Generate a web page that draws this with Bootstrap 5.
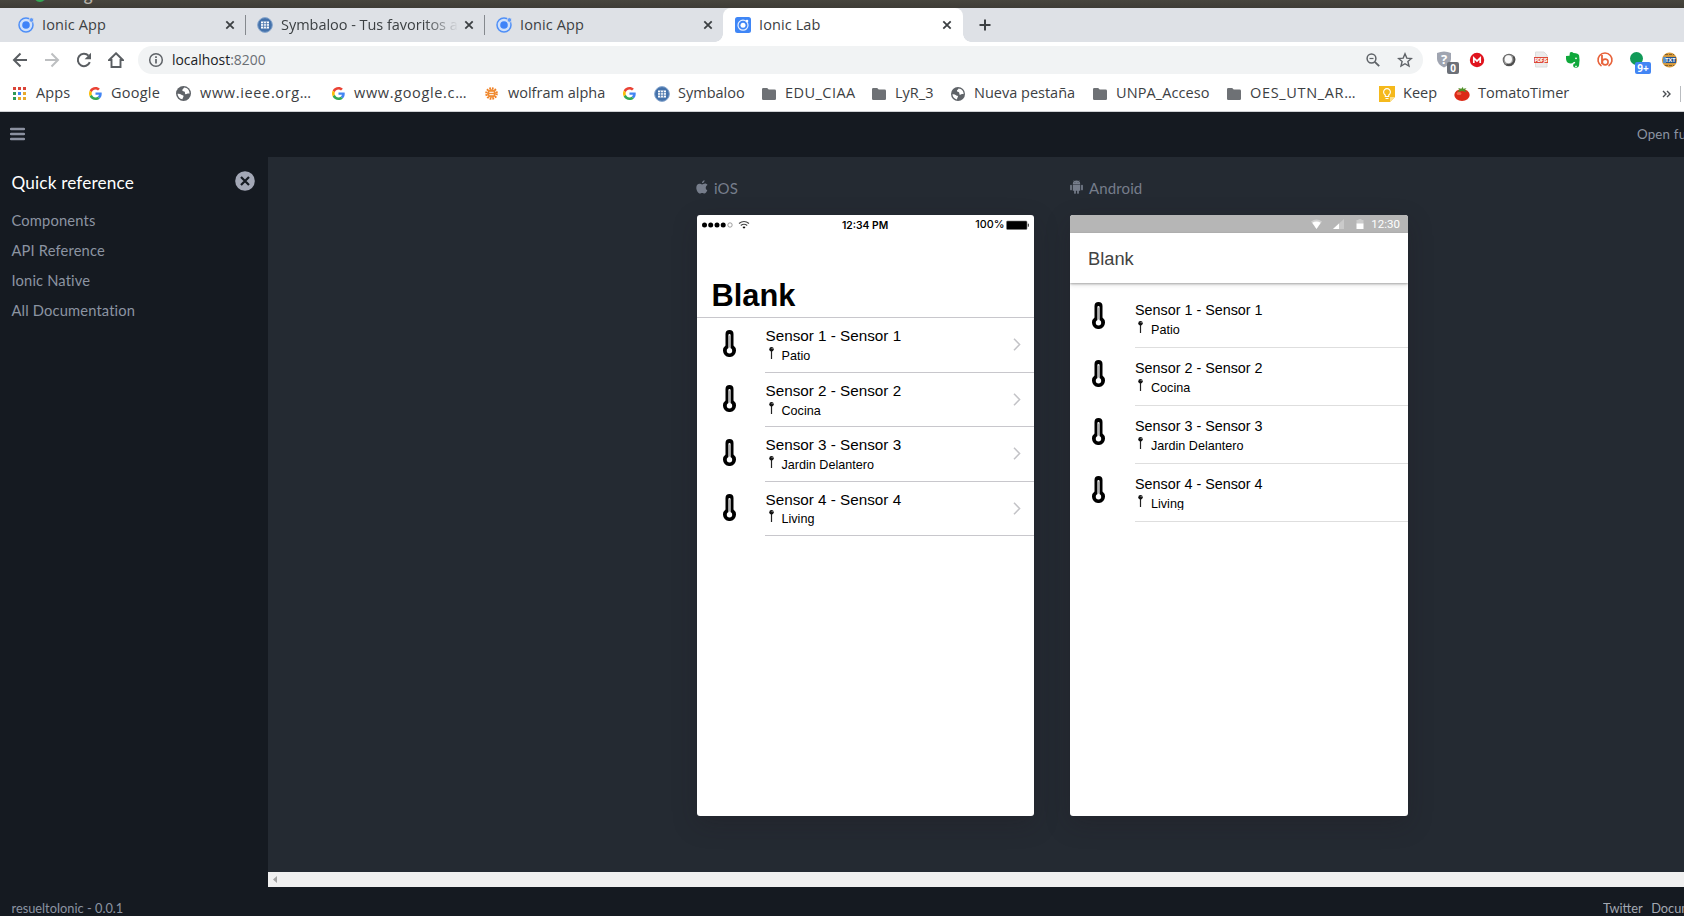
<!DOCTYPE html>
<html lang="es">
<head>
<meta charset="utf-8">
<meta name="viewport" content="width=device-width, initial-scale=1">
<title>Ionic Lab</title>
<link href="https://cdn.jsdelivr.net/npm/bootstrap@5.3.0/dist/css/bootstrap.min.css" rel="stylesheet">
<style>
  html, body { height: 100%; }
  body { font-family: "Open Sans", "Noto Sans", sans-serif; font-size: 14.5px; line-height: 20px; color: #3c4043; background: #151a21; overflow: hidden; }
  svg { display: block; flex: none; }
  .window-title { height: 8px; background: linear-gradient(#47453e, #3e3c36); color: #b5b1a8; padding-left: 34px; font-size: 15.4px; font-weight: 600; }
  .window-title > * { margin-top: -15px; }
  .window-title > svg { margin-top: -11px; }
  .tab-strip { height: 34px; background: #dee1e6; }
  .browser-tab { height: 34px; position: relative; white-space: nowrap; }
  .browser-tab .tab-label { padding-left: 8px; line-height: 31px; height: 33px; overflow: hidden; letter-spacing: .1px; }
  .tab-sep { width: 1px; height: 20px; margin-top: 7px; background: #85898e; }
  .tab-active { background: #fff; border-radius: 8px 8px 0 0; }
  .tab-active::before, .tab-active::after { content: ""; position: absolute; bottom: 0; width: 8px; height: 8px; }
  .tab-active::before { left: -8px; background: radial-gradient(circle at 0 0, transparent 7.5px, #fff 8px); }
  .tab-active::after { right: -8px; background: radial-gradient(circle at 100% 0, transparent 7.5px, #fff 8px); }
  .faded { -webkit-mask-image: linear-gradient(90deg, #000 82%, transparent 101%); mask-image: linear-gradient(90deg, #000 82%, transparent 101%); }
  .nav-bar { height: 36px; background: #fff; padding-left: 12px; }
  .nav-buttons { width: 126px; gap: 16px; }
  .omnibox { width: 1285px; height: 28px; border-radius: 14px; background: #f1f3f4; padding: 0 10px; font-size: 13.9px; color: #202124; }
  .omnibox .port { color: #6b6f74; }
  .ext { width: 32px; height: 28px; position: relative; }
  .ext-count { position: absolute; font: bold 10px/12px "Open Sans", sans-serif; color: #fff; border-radius: 2px; text-align: center; height: 12px; top: 16px; }
  .bookmarks { height: 34px; background: #fff; border-bottom: 1px solid #cfd1d4; display: grid; white-space: nowrap; padding: 0 0 2px 13px;
    grid-template-columns: 76px 87px 155px 154px 138px 31px 108px 110px 79px 142px 134px 152px 75px 208px 1fr; align-items: center; }
  .bm { display: flex; align-items: center; }
  .bm span { position: relative; top: -1px; }
  .bm .loose { letter-spacing: .66px; }
  .lab { font-family: Lato, sans-serif; color: #8c94a2; }
  .lab-header { height: 45px; background: #151a21; padding: 0 0 0 10px; }
  .open-full { width: 47px; font-size: 13.3px; letter-spacing: .2px; white-space: nowrap; overflow: hidden; margin-top: -2px; }
  .lab-body { height: 730px; }
  .lab-side { width: 268px; padding: 16px 13px 0 11.5px; }
  .lab-side h2 { font-size: 17.2px; line-height: 20px; color: #fff; font-weight: 400; letter-spacing: .16px; margin-bottom: 12px; }
  .lab-side a { display: block; color: #8c94a2; text-decoration: none; font-size: 14.7px; line-height: 30px; letter-spacing: .16px; }
  .stage { background: #242a32; padding-left: 429px; gap: 36px; height: 715px; }
  .device-label { height: 58px; padding-top: 21px; color: #767d8b; font-size: 15px; letter-spacing: .12px; gap: 6px; }
  .device-label svg { margin: 2px 0 0 -1px; }
  .device { height: 601px; background: #fff; border-radius: 3px; overflow: hidden; color: #000; font-family: "Liberation Sans", Arial, sans-serif; box-shadow: 0 8px 24px rgba(33,24,33,.25); }
  .ios { width: 337px; }
  .android { width: 338px; }
  .ios-status { height: 20px; padding: 0 5px; font: 600 10.3px/20px Inter, sans-serif; display: grid; grid-template-columns: 137px 1fr auto auto; align-items: center; }
  .ios-title { height: 83px; border-bottom: 1px solid #c8c7cc; font-size: 30.8px; font-weight: 700; padding: 42.5px 0 0 14.5px; line-height: 36px; }
  .md-status { height: 18px; background: #b6b6b6; color: #fff; font: 500 11.5px/19px Roboto, sans-serif; padding-right: 8px; }
  .md-title { height: 50px; padding: 14px 18px; font-size: 18.3px; line-height: 23px; color: #424242; box-shadow: 0 1px 2px rgba(0,0,0,.28), 0 2px 5px rgba(0,0,0,.12); margin-bottom: 7px; }
  .ios .sensor { height: 54.4px; }
  .ios .sensor-list { padding-top: .4px; }
  .android .sensor { height: 58px; }
  .thermo { width: 68px; }
  .ios .thermo { padding: 12px 0 0 25.5px; }
  .android .thermo { width: 65px; padding: 12px 0 0 21.5px; }
  .ios .info { border-bottom: 1px solid #c8c7cc; padding: 8.1px 13px 0 .5px; font-size: 15.25px; }
  .android .info { border-bottom: 1px solid #dedede; padding-top: 10px; font-size: 14.35px; }
  .place { font-size: 12.6px; line-height: 18px; margin-top: .6px; padding-left: 3px; gap: 8px; height: 15.5px; overflow: hidden; }
  .ios .place { height: 18px; margin-top: .8px; }
  .scroll-track { height: 15px; background: #f0f0f0; padding-left: 5px; }
  .lab-footer { height: 29px; padding: 8px 0 0 11.5px; font-size: 12.8px; line-height: 27px; white-space: nowrap; overflow: hidden; }
  .foot-links { width: 81px; gap: 8.5px; overflow: hidden; color: #a3a8b2; }
</style>
</head>
<body>
<svg width="0" height="0" class="position-absolute">
  <defs>
    <symbol id="ionic" viewBox="0 0 16 16"><circle cx="8" cy="8" r="7" fill="#cfe0fb" stroke="#4f8ff7" stroke-width="1.5"/><circle cx="8" cy="8" r="3.8" fill="#3f83f8"/><circle cx="13.4" cy="3" r="2.3" fill="#5d98f7" stroke="#dee1e6" stroke-width=".8"/></symbol>
    <symbol id="symba" viewBox="0 0 16 16"><circle cx="8" cy="8" r="7.4" fill="#4472ab" stroke="#8ba9cf" stroke-width="1"/><path d="M4 4.5h8v7H4z" fill="#fff"/><path d="M4 6.7h8M4 9.2h8M6.6 4.5v7M9.4 4.5v7" stroke="#4472ab" stroke-width=".8"/></symbol>
    <symbol id="x" viewBox="0 0 10 10"><path d="M1.3 1.3l7.4 7.4M8.7 1.3L1.3 8.7" stroke="#3c4043" stroke-width="1.8"/></symbol>
    <symbol id="goog" viewBox="0 0 48 48"><path fill="#EA4335" d="M24 9.5c3.54 0 6.71 1.22 9.21 3.6l6.85-6.85C35.9 2.38 30.47 0 24 0 14.62 0 6.51 5.38 2.56 13.22l7.98 6.19C12.43 13.72 17.74 9.5 24 9.5z"/><path fill="#4285F4" d="M46.98 24.55c0-1.57-.15-3.09-.38-4.55H24v9.02h12.94c-.58 2.96-2.26 5.48-4.78 7.18l7.73 6c4.51-4.18 7.09-10.36 7.09-17.65z"/><path fill="#FBBC05" d="M10.53 28.59c-.48-1.45-.76-2.99-.76-4.59s.27-3.14.76-4.59l-7.98-6.19C.92 16.46 0 20.12 0 24c0 3.88.92 7.54 2.56 10.78l7.97-6.19z"/><path fill="#34A853" d="M24 48c6.48 0 11.93-2.13 15.89-5.81l-7.73-6c-2.15 1.45-4.92 2.3-8.16 2.3-6.26 0-11.57-4.22-13.47-9.91l-7.98 6.19C6.51 42.62 14.62 48 24 48z"/></symbol>
    <symbol id="globe" viewBox="0 0 14 14"><circle cx="7" cy="7" r="7" fill="#5f6368"/><path d="M1.4 7.2c1.5-.2 2.7.1 3.7 1 .9.8 1.900.2 1.900 1.300 0 1-.8 1-1 2.900C3.500 12 1.700 10 1.400 7.200zM7.500 1.500c-.1 1.200-1.700 1.300-1.600 2.600.1 1 1.600.5 2.200 1.300.7.900-.3 2 .9 2.300 1.200.2 1.500-.9 3.600-.5C12.800 4 10.500 1.600 7.500 1.500z" fill="#fff"/></symbol>
    <symbol id="folder" viewBox="0 0 14 12"><path d="M0 1.300Q0 0 1.300 0h3.900l1.500 1.600h6Q14 1.600 14 2.900v7.800Q14 12 12.700 12H1.300Q0 12 0 10.700z" fill="#6e7175"/></symbol>
    <symbol id="therm" viewBox="0 0 13 27"><path d="M2.500 4a4 4 0 0 1 8 0v11.400a6.500 6.500 0 1 1-8 0z" fill="#000"/><path d="M6.500 5v14" stroke="#fff" stroke-width="2.200" stroke-linecap="round"/><path d="M6.500 5.500v12" stroke="#aaa" stroke-width=".9"/><circle cx="6.500" cy="20.700" r="2.700" fill="#fff"/></symbol>
    <symbol id="pin" viewBox="0 0 5 12"><path d="M2.500 3v9" stroke="#222" stroke-width="1.200"/><circle cx="2.500" cy="2.200" r="2.200" fill="#111"/><circle cx="3.100" cy="1.600" r=".6" fill="#aaa"/></symbol>
    <symbol id="chev" viewBox="0 0 8 13"><path d="M1 .8l5.600 5.700L1 12.200" fill="none" stroke="#c3c3c7" stroke-width="1.500"/></symbol>
  </defs>
</svg>

<div class="window-title d-flex overflow-hidden">
  <svg width="12" height="14"><use href="#goog" width="12" height="14"/></svg><span class="ms-2">Google Chrome</span>
</div>

<div class="tab-strip d-flex">
  <div class="browser-tab d-flex align-items-center" style="width:245px;padding:0 10px 0 18px">
    <svg width="16" height="16"><use href="#ionic"/></svg><span class="tab-label flex-grow-1">Ionic App</span><svg width="10" height="10"><use href="#x"/></svg>
  </div>
  <div class="tab-sep"></div>
  <div class="browser-tab d-flex align-items-center" style="width:238px;padding:0 10px 0 11px">
    <svg width="16" height="16"><use href="#symba"/></svg><span class="tab-label faded" style="width:184px;letter-spacing:-.03px">Symbaloo - Tus favoritos a</span><svg width="10" height="10" class="ms-auto"><use href="#x"/></svg>
  </div>
  <div class="tab-sep"></div>
  <div class="browser-tab d-flex align-items-center" style="width:238px;padding:0 10px 0 11px">
    <svg width="16" height="16"><use href="#ionic"/></svg><span class="tab-label flex-grow-1">Ionic App</span><svg width="10" height="10"><use href="#x"/></svg>
  </div>
  <div class="browser-tab tab-active d-flex align-items-center" style="width:240px;padding:0 11px 0 12px">
    <svg width="16" height="16" viewBox="0 0 16 16"><rect width="16" height="16" rx="2.500" fill="#3f86f6"/><circle cx="8" cy="8.200" r="5" fill="none" stroke="#e8f1ff" stroke-width="1.200"/><circle cx="8" cy="8.200" r="2.500" fill="#fff"/><circle cx="12" cy="4" r="1.300" fill="#fff"/></svg><span class="tab-label flex-grow-1">Ionic Lab</span><svg width="10" height="10"><use href="#x"/></svg>
  </div>
  <svg width="44" height="34" viewBox="0 0 44 34"><path d="M22 11.500v11M16.500 17h11" stroke="#3c4043" stroke-width="2"/></svg>
</div>

<div class="nav-bar d-flex align-items-center">
  <div class="nav-buttons d-flex">
    <svg width="16" height="16" viewBox="0 0 16 16" fill="none" stroke="#5a5e62" stroke-width="2"><path d="M15 8H2.500M8.500 1.500L2 8l6.500 6.500"/></svg>
    <svg width="16" height="16" viewBox="0 0 16 16" fill="none" stroke="#bdbfc1" stroke-width="2"><path d="M1 8h12.500M7.500 1.500L14 8l-6.500 6.500"/></svg>
    <svg width="16" height="16" viewBox="0 0 16 16"><path d="M13.800 10.200A6.200 6.200 0 1 1 12.500 3.600" fill="none" stroke="#5a5e62" stroke-width="2"/><path d="M15 .8v6.400H8.600z" fill="#5a5e62"/></svg>
    <svg width="16" height="16" viewBox="0 0 16 16"><path d="M8 1.300L14.800 8h-2.300v7h-9V8H1.200z" fill="none" stroke="#5a5e62" stroke-width="1.900"/></svg>
  </div>
  <div class="omnibox d-flex align-items-center">
    <svg width="16" height="16" viewBox="0 0 16 16"><circle cx="8" cy="8" r="6.300" fill="none" stroke="#5f6368" stroke-width="1.500"/><path d="M8 7v4.500M8 4.300v1.600" stroke="#5f6368" stroke-width="1.700"/></svg>
    <span class="ms-2 flex-grow-1">localhost<span class="port">:8200</span></span>
    <svg width="16" height="16" viewBox="0 0 16 16" fill="none" stroke="#5f6368" stroke-width="1.500"><circle cx="6.500" cy="6.500" r="4.400"/><path d="M9.800 9.800l4.400 4.400" stroke-width="1.900"/><path d="M4.500 6.500h4" stroke-width="1.200"/></svg>
    <svg width="16" height="16" viewBox="0 0 16 16" class="ms-3"><path d="M8 1.800l1.800 4.300 4.600.4-3.500 3 1.100 4.600L8 11.700l-4 2.400 1.100-4.600-3.500-3 4.600-.4z" fill="none" stroke="#5f6368" stroke-width="1.400"/></svg>
  </div>
  <div class="d-flex" style="margin-left:6px">
    <div class="ext"><svg width="32" height="28"><path d="M8 7q7-3 14 0v6q0 5-7 8.500Q8 18 8 13z" fill="#a0a5b1"/><text x="15" y="18" text-anchor="middle" font-size="13" font-weight="700" fill="#fff">?</text></svg><span class="ext-count" style="left:18px;width:12px;background:#6c7078">0</span></div>
    <div class="ext"><svg width="32" height="28"><circle cx="16" cy="14" r="7.200" fill="#e0141e"/><path d="M12.800 17v-5l3.200 3 3.200-3v5" fill="none" stroke="#fff" stroke-width="1.700"/></svg></div>
    <div class="ext"><svg width="32" height="28"><circle cx="16" cy="14" r="6.300" fill="#666"/><circle cx="16" cy="14" r="5.300" fill="#999"/><ellipse cx="15.400" cy="13.200" rx="3.600" ry="4" fill="#fafafa"/><path d="M20.500 10.500a5.600 5.600 0 0 1-7 8" fill="none" stroke="#4c4c4c" stroke-width="1.800"/></svg></div>
    <div class="ext"><svg width="32" height="28"><path d="M10.500 6h8.500l3 3v12H10.500z" fill="#ececec" stroke="#ddd"/><rect x="9" y="11" width="14" height="6" fill="#dd4a38"/><text x="16" y="16.100" text-anchor="middle" font-size="5.500" font-weight="700" fill="#fff" textLength="13">PDF JS</text></svg></div>
    <div class="ext"><svg width="32" height="28"><path d="M9 10l3.500-.3.400-3.200Q15 5.500 16.500 7q5 0 5.600 2.500 1 5 0 9.500-.4 2.800-3 2.800-3 0-3-2.500 0-2 2-2v-1.500q-2 0-2.800 1.500-5 .5-5.800-2.200Q8.800 12.500 9 10z" fill="#0fa83b"/><circle cx="19" cy="12.300" r=".9" fill="#fff"/><path d="M18 20.300h2" stroke="#fff"/></svg></div>
    <div class="ext"><svg width="32" height="28" fill="none" stroke="#e8623a"><path d="M12.500 20a7 7 0 1 1 7 0" stroke-width="1.600"/><path d="M13 9v9" stroke-width="1.800"/><circle cx="16.200" cy="16" r="2.900" stroke-width="1.600"/></svg></div>
    <div class="ext"><svg width="32" height="28"><circle cx="15.500" cy="12.500" r="6.500" fill="#119a58"/></svg><span class="ext-count" style="left:14px;width:16px;background:#4285f4">9+</span></div>
    <div class="ext" style="width:31px"><svg width="31" height="28"><circle cx="16.500" cy="14" r="7.600" fill="#d79a3c"/><path d="M12 8.500h9M12 19.500h9" stroke="#80602e" stroke-width="1.100" stroke-dasharray="3 1"/><rect x="12" y="11" width="11" height="6" fill="#26558f"/><rect x="10" y="11" width="3" height="6" fill="#5d8fc4"/><text x="17.300" y="16.300" text-anchor="middle" font-size="5.600" font-weight="700" fill="#fff">TXT</text></svg></div>
  </div>
</div>

<div class="bookmarks">
  <div class="bm"><svg width="13" height="13" viewBox="0 0 13 13"><path d="M0 0h3v3H0zM5 0h3v3H5zM10 0h3v3h-3z" fill="#db4437"/><path d="M0 5h3v3H0zM0 10h3v3H0z" fill="#2f9a57"/><path d="M5 5h3v3H5z" fill="#4285f4"/><path d="M10 5h3v3h-3zM5 10h3v3H5zM10 10h3v3h-3z" fill="#e8a92c"/></svg><span style="margin-left:10px;letter-spacing:.15px">Apps</span></div>
  <div class="bm"><svg width="13" height="13"><use href="#goog"/></svg><span style="margin-left:9px;letter-spacing:.25px">Google</span></div>
  <div class="bm"><svg width="15" height="15"><use href="#globe"/></svg><span class="loose" style="margin-left:9px">www.ieee.org…</span></div>
  <div class="bm"><svg width="13" height="13" style="margin-left:.5px"><use href="#goog"/></svg><span class="loose" style="margin-left:9.5px">www.google.c…</span></div>
  <div class="bm"><svg width="13" height="13" viewBox="0 0 13 13"><circle cx="6.500" cy="6.500" r="4.300" fill="#f08c32"/><circle cx="6.500" cy="6.500" r="5.200" fill="none" stroke="#ef7f22" stroke-width="2.200" stroke-dasharray="1.700 1"/><path d="M4.300 5.300h4.400M4.300 7.700h4.400" stroke="#fff" stroke-width="1"/></svg><span style="margin-left:10px">wolfram alpha</span></div>
  <div class="bm"><svg width="13" height="13"><use href="#goog"/></svg></div>
  <div class="bm"><svg width="16" height="16"><use href="#symba"/></svg><span style="margin-left:8px">Symbaloo</span></div>
  <div class="bm"><svg width="14" height="12"><use href="#folder"/></svg><span style="margin-left:9px;letter-spacing:.45px">EDU_CIAA</span></div>
  <div class="bm"><svg width="14" height="12"><use href="#folder"/></svg><span style="margin-left:9px">LyR_3</span></div>
  <div class="bm"><svg width="14" height="14"><use href="#globe"/></svg><span style="margin-left:9px">Nueva pestaña</span></div>
  <div class="bm"><svg width="14" height="12"><use href="#folder"/></svg><span style="margin-left:9px;letter-spacing:.1px">UNPA_Acceso</span></div>
  <div class="bm"><svg width="14" height="12"><use href="#folder"/></svg><span class="loose" style="margin-left:9px">OES_UTN_AR…</span></div>
  <div class="bm"><svg width="16" height="16" viewBox="0 0 16 16"><path d="M0 0h16v11l-5 5H0z" fill="#f5b91c"/><path d="M16 11h-5v5z" fill="#fbe08c"/><path d="M6.300 10.500V9a3.400 3.400 0 1 1 3.400 0v1.500zM6.500 12.500h3" fill="none" stroke="#fff" stroke-width="1.100"/></svg><span style="margin-left:8px">Keep</span></div>
  <div class="bm"><svg width="16" height="16" viewBox="0 0 16 16"><ellipse cx="8" cy="9" rx="7.700" ry="6" fill="#dc2a17"/><ellipse cx="5" cy="7.500" rx="2.500" ry="1.600" fill="#f2674b"/><path d="M8 5L3.500 6l2-2.600L4 2l3.300.7L9 .8l.2 2 3.300-.5-1.700 1.600 2 2z" fill="#4f9128"/></svg><span style="margin-left:8px">TomatoTimer</span></div>
  <div class="bm"><svg width="19" height="20" viewBox="2 0 19 20"><path d="M3 7l3 3-3 3M7 7l3 3-3 3" fill="none" stroke="#4b4f53" stroke-width="1.400"/><path d="M20.500 2v16" stroke="#b9bcc0"/></svg></div>
</div>

<div class="lab">
  <div class="lab-header d-flex align-items-center justify-content-between">
    <svg width="15" height="14" viewBox="0 0 15 14" style="margin-top:-2px"><path d="M1 2h13M1 7h13M1 12h13" stroke="#8b91a0" stroke-width="2.400" stroke-linecap="round"/></svg>
    <span class="open-full">Open fu</span>
  </div>
  <div class="lab-body d-flex">
    <aside class="lab-side">
      <div class="d-flex justify-content-between"><h2>Quick reference</h2>
        <svg width="20" height="20" viewBox="0 0 20 20" style="margin-top:-2px"><circle cx="10" cy="10" r="9.800" fill="#a3a8b6"/><path d="M6 6l8 8M14 6l-8 8" stroke="#151a21" stroke-width="2.200"/></svg></div>
      <nav><a href="#">Components</a><a href="#">API Reference</a><a href="#">Ionic Native</a><a href="#">All Documentation</a></nav>
    </aside>
    <main class="flex-grow-1">
      <div class="stage d-flex">
        <section>
          <div class="device-label d-flex"><svg width="12" height="14" viewBox="0 0 12 14"><path d="M8.600.2c.1 1.500-1.200 2.900-2.600 2.900C5.900 1.700 7.200.3 8.600.2zM11.300 10.200c-.7 1.800-1.700 3.300-2.900 3.300-.8 0-1.200-.5-2.200-.5s-1.500.5-2.200.5C2.300 13.500.3 10.500.3 7.700c0-2.500 1.500-4 3.200-4 1 0 1.900.7 2.600.7.600 0 1.700-.8 2.900-.8 1.100 0 2 .6 2.500 1.400C9.200 6.300 9.300 9.200 11.300 10.200z" fill="#767d8b"/></svg><span>iOS</span></div>
          <div class="device ios">
            <div class="ios-status">
              <svg width="50" height="12" viewBox="0 0 50 12"><g fill="#000"><circle cx="2.500" cy="6" r="2.500"/><circle cx="8.700" cy="6" r="2.500"/><circle cx="15" cy="6" r="2.500"/><circle cx="21.200" cy="6" r="2.500"/></g><circle cx="28" cy="6" r="2.200" fill="none" stroke="#777" stroke-width=".7"/><g fill="none" stroke="#444" stroke-width="1.200"><path d="M37 4.500q5-4 10 0"/><path d="M38.800 6.500q3.200-2.500 6.400 0"/></g><path d="M40.500 8q1.500-1 3 0L42 9.800z"/></svg>
              <span style="padding-left:3px">12:34 PM</span><span class="fw-medium" style="font-size:10.800px">100%</span>
              <svg width="23" height="12" viewBox="0 0 23 12" style="margin-left:1.500px"><rect x=".5" y="2" width="20.500" height="8.500" rx="1" fill="#000" stroke="#777" stroke-width=".6"/><path d="M22.300 4.700v3" stroke="#222" stroke-width="1"/></svg>
            </div>
            <div class="ios-title">Blank</div>
            <div class="sensor-list">
            <div class="sensor d-flex"><div class="thermo"><svg width="13" height="27"><use href="#therm"/></svg></div><div class="info flex-grow-1 d-flex justify-content-between"><div><div>Sensor 1 - Sensor 1</div><div class="place d-flex"><svg width="5" height="12"><use href="#pin"/></svg>Patio</div></div><svg width="8" height="13" style="margin-top:12px"><use href="#chev"/></svg></div></div>
            <div class="sensor d-flex"><div class="thermo"><svg width="13" height="27"><use href="#therm"/></svg></div><div class="info flex-grow-1 d-flex justify-content-between"><div><div>Sensor 2 - Sensor 2</div><div class="place d-flex"><svg width="5" height="12"><use href="#pin"/></svg>Cocina</div></div><svg width="8" height="13" style="margin-top:12px"><use href="#chev"/></svg></div></div>
            <div class="sensor d-flex"><div class="thermo"><svg width="13" height="27"><use href="#therm"/></svg></div><div class="info flex-grow-1 d-flex justify-content-between"><div><div>Sensor 3 - Sensor 3</div><div class="place d-flex"><svg width="5" height="12"><use href="#pin"/></svg>Jardin Delantero</div></div><svg width="8" height="13" style="margin-top:12px"><use href="#chev"/></svg></div></div>
            <div class="sensor d-flex"><div class="thermo"><svg width="13" height="27"><use href="#therm"/></svg></div><div class="info flex-grow-1 d-flex justify-content-between"><div><div>Sensor 4 - Sensor 4</div><div class="place d-flex"><svg width="5" height="12"><use href="#pin"/></svg>Living</div></div><svg width="8" height="13" style="margin-top:12px"><use href="#chev"/></svg></div></div>
            </div>
          </div>
        </section>
        <section>
          <div class="device-label d-flex"><svg width="13" height="14" viewBox="0 0 13 14" fill="#767d8b" class="ms-0"><path d="M2.800 4a3.700 3.400 0 0 1 7.400 0zM2.800 4.600h7.400v6.200H2.800z"/><path d="M1 5.500v4M12 5.500v4M5 10v3M8 10v3" stroke="#767d8b" stroke-width="1.700" stroke-linecap="round"/><path d="M3.700.4l1 1.400M9.300.4l-1 1.400" stroke="#767d8b" stroke-width=".6"/><circle cx="5" cy="2.600" r=".4" fill="#242a32"/><circle cx="8" cy="2.600" r=".4" fill="#242a32"/></svg><span>Android</span></div>
          <div class="device android">
            <div class="md-status d-flex justify-content-end align-items-center">
              <svg width="60" height="14" viewBox="0 0 60 14"><path d="M0 4.500q5.500-4 11 0L5.500 12z" fill="#d0d0d0"/><path d="M1.300 5.700q4.200-2.500 8.400 0L5.500 12z" fill="#fff"/><path d="M33 2v10H22z" fill="#cacaca"/><path d="M28 6.500V12h-6z" fill="#fff"/><path d="M45.500 3h2V2h3v1h2v4h-7z" fill="#cdcdcd"/><path d="M45.500 6.500h7V12h-7z" fill="#fff"/></svg>
              <span class="fw-normal">12:30</span>
            </div>
            <div class="md-title">Blank</div>
            <div class="sensor d-flex"><div class="thermo"><svg width="13" height="27"><use href="#therm"/></svg></div><div class="info flex-grow-1"><div>Sensor 1 - Sensor 1</div><div class="place d-flex"><svg width="5" height="12"><use href="#pin"/></svg>Patio</div></div></div>
            <div class="sensor d-flex"><div class="thermo"><svg width="13" height="27"><use href="#therm"/></svg></div><div class="info flex-grow-1"><div>Sensor 2 - Sensor 2</div><div class="place d-flex"><svg width="5" height="12"><use href="#pin"/></svg>Cocina</div></div></div>
            <div class="sensor d-flex"><div class="thermo"><svg width="13" height="27"><use href="#therm"/></svg></div><div class="info flex-grow-1"><div>Sensor 3 - Sensor 3</div><div class="place d-flex"><svg width="5" height="12"><use href="#pin"/></svg>Jardin Delantero</div></div></div>
            <div class="sensor d-flex"><div class="thermo"><svg width="13" height="27"><use href="#therm"/></svg></div><div class="info flex-grow-1"><div>Sensor 4 - Sensor 4</div><div class="place d-flex"><svg width="5" height="12"><use href="#pin"/></svg>Living</div></div></div>
          </div>
        </section>
      </div>
      <div class="scroll-track d-flex align-items-center"><svg width="4" height="7" viewBox="0 0 4 7"><path d="M4 0v7L0 3.500z" fill="#a3a3a3"/></svg></div>
    </main>
  </div>
  <footer class="lab-footer d-flex justify-content-between"><span>resueltoIonic - 0.0.1</span><span class="foot-links d-flex"><span>Twitter</span><span>Docum</span></span></footer>
</div>
<script src="https://cdn.jsdelivr.net/npm/bootstrap@5.3.0/dist/js/bootstrap.bundle.min.js"></script>
</body>
</html>
